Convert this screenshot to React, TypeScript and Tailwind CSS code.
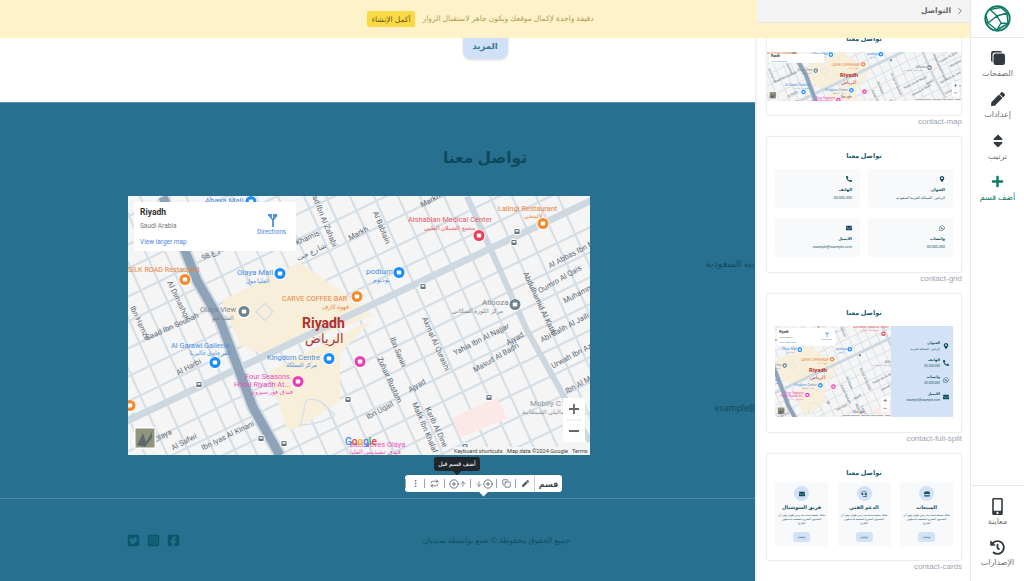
import { ArrowDown, ArrowUp, ChevronLeft, CirclePlus, Copy, EllipsisVertical, Repeat } from "lucide-react";
import type { ReactNode } from "react";
import { FaEnvelope, FaHeadset, FaHistory, FaMapMarkerAlt, FaMobileAlt, FaPen, FaPhoneAlt, FaPlus, FaSort, FaStore, FaWhatsapp } from "react-icons/fa";
import { FaSquareFacebook, FaSquareInstagram, FaSquareTwitter } from "react-icons/fa6";
import { IoCopy } from "react-icons/io5";

const sans = "font-['Noto_Sans','DejaVu_Sans',sans-serif]";

// streets: parallel to the main diagonal (intercepts) and to the dark highway (offsets)
const crossStreets = [20, 48, 72, 100, 125, 152, 180, 205, 255, 280, 305, 332, 358, 385, 410, 440];
const longStreets = [-100, -78, -55, -30, -8, 12, 58, 82, 104, 128, 150, 176, 198, 222, 246, 270, 292, 316, 362, 384, 408, 430];

const streetLabels: [string, number, number, number][] = [
  ["Al Dimashqi", 39, 86, 64],
  ["Saad Ibn Soubah", 19, 144, -24],
  ["Ibn Hamza", 2, 111, 65],
  ["Al Harbi", 50, 179, -28],
  ["Al Safwi", 45, 254, -28],
  ["Ibn Iyas Al Kinani", 75, 254, -26],
  ["Al Olaya", 20, 250, -28],
  ["Khamis", 169, 49, -25],
  ["شارع 98", 75, 64, -25],
  ["شارع مت", 170, 64, -25],
  ["Mohammad Ibn Al Zahabi", 172, -30, 68],
  ["Markh", 294, 11, -28],
  ["Markh", 222, 44, -28],
  ["Al Babtain", 245, 16, 68],
  ["Abdulhamid Al Katib", 395, 77, 65],
  ["Al Abbas Ibn M", 422, 72, -28],
  ["Oumro Al Qais", 412, 97, -30],
  ["Muhammad", 437, 107, -28],
  ["Abi Salih Al Jaili", 414, 146, -28],
  ["Urwah Ibn Az", 425, 172, -28],
  ["Ibn Al Mu", 439, 197, -28],
  ["Masud Al Badri", 347, 176, -30],
  ["Yahia Ibn Al Najjar", 327, 159, -27],
  ["Ajyad", 380, 149, -30],
  ["Ajyad", 282, 196, -30],
  ["Ibn Uqail", 240, 223, -28],
  ["Ibn Sanin", 262, 142, 68],
  ["Zuhair Rustam", 249, 162, 65],
  ["Malik Ibn Khalaf", 284, 207, 67],
  ["Karib Al Dine", 297, 212, 65],
  ["Akmal Al Qurashi", 294, 122, 66],
];

const placeLabels: [string, number, number, string, number][] = [
  ["Abaya Mall", 77, 6, "#4a90e2", 7.8],
  ["Olaya Mall", 109, 78, "#4a90e2", 7.8],
  ["العليا مول", 118, 86, "#4a90e2", 5.8],
  ["podium", 238, 77, "#4a90e2", 8],
  ["بوديوم", 245, 85, "#4a90e2", 5.8],
  ["CARVE COFFEE BAR", 154, 104, "#e8843c", 7.2],
  ["قهوة كارف", 194, 112, "#e8843c", 5.8],
  ["SILK ROAD Restaurant", 0, 75, "#e8843c", 7.2],
  ["Olaya View", 72, 115, "#7b8790", 7.4],
  ["العليا فيو", 84, 123, "#7b8790", 5.8],
  ["Alshablan Medical Center", 280, 25, "#e8596c", 7.4],
  ["مجمع الشبلان الطبي", 296, 33, "#e8596c", 5.8],
  ["Lalingi Restaurant", 370, 14, "#e8843c", 7.4],
  ["لالينجي", 396, 21, "#e8843c", 5.8],
  ["Allooza", 354, 108, "#7b8790", 8],
  ["مركز اللوزة السكاني", 324, 116, "#7b8790", 5.8],
  ["Al Garawi Galleria", 43, 151, "#4a90e2", 7.4],
  ["القرعاوي غاليريا", 62, 158, "#4a90e2", 5.8],
  ["Kingdom Centre", 139, 163, "#4a90e2", 7.4],
  ["مركز المملكة", 158, 170, "#4a90e2", 5.8],
  ["Four Seasons", 117, 182, "#ec4dbb", 7.4],
  ["Hotel Riyadh At...", 106, 190, "#ec4dbb", 7.4],
  ["فندق فور سيزونز", 122, 197, "#ec4dbb", 5.8],
  ["Executives Olaya", 222, 250, "#ec4dbb", 7.4],
  ["فندق تنفيذيس العليا", 222, 257, "#ec4dbb", 5.8],
  ["Mobily C1", 402, 209, "#8a949c", 8],
  ["ماليلي الشيتقابية", 394, 217, "#8a949c", 5.8],
];

const pins: [number, number, string][] = [
  [123, 5, "#1a8cff"],
  [152, 77, "#1a8cff"],
  [271, 76, "#1a8cff"],
  [229, 100, "#f28b30"],
  [57, 83, "#f28b30"],
  [116, 115, "#6f8290"],
  [351, 39, "#ea3f56"],
  [415, 27, "#f28b30"],
  [387, 108, "#6f8290"],
  [87, 166, "#1a8cff"],
  [201, 162, "#1a8cff"],
  [170, 185, "#ec3fb2"],
  [232, 165, "#ec3fb2"],
  [2, 209, "#f28b30"],
];

const busStops: [number, number][] = [
  [389, 35], [386, 46], [295, 90], [71, 188], [220, 203], [133, 242], [156, 247], [361, 201], [337, 250],
];

type MapViewProps = {
  width: number;
  height: number;
  scale?: number;
  ui?: number;
  compact?: boolean;
};

// Street map drawing; thumbnails reuse it as a centred crop, the google controls stay in the corners
function MapView({ width, height, scale = 1, ui = 1, compact = false }: MapViewProps) {
  const vw = width / scale;
  const vh = height / scale;
  const x0 = (462 - vw) / 2;
  const y0 = (258 - vh) / 2;
  const k = ui / scale;

  return (
    <svg width={width} height={height} viewBox={`${x0} ${y0} ${vw} ${vh}`} className="block shrink-0 font-['Roboto',sans-serif]">
      <rect x={-50} y={-50} width={600} height={400} fill="#f5f5f5" />
      {crossStreets.map((b) => (
        <line key={b} x1={-20} y1={b + 9.7} x2={480} y2={b - 233} stroke="#d6dfe6" strokeWidth={2.2} />
      ))}
      {longStreets.map((c) => (
        <line key={c} x1={c - 9} y1={-20} x2={c + 127} y2={280} stroke="#d6dfe6" strokeWidth={2.2} />
      ))}
      <polygon points="94,104 172,66 212,94 245,119 140,159 112,149" fill="#f8efdb" />
      <polygon points="140,176 224,132 244,124 212,157 212,204 172,231 160,234" fill="#f8efdb" />
      <path d="M137 107l8 8-8 9-9-9ZM172 229c4-10 4-20 6-24s10-2 14 0 10 10 14 12-10 8-20 10Z" fill="none" stroke="#d6dfe6" strokeWidth={1.4} />
      <polygon points="325,221 369,201 379,222 332,241" fill="#fce8e6" />
      <polygon points="0,220 6,215 10,222 3,226" fill="#cdeccf" />
      <polyline points="339,0 399,134 440,207 462,245" fill="none" stroke="#cdd7df" strokeWidth={6} />
      <line x1={-10} y1={229} x2={480} y2={-4} stroke="#ced8e1" strokeWidth={7} />
      <polyline points="35,0 69,84 92,124 125,211 152,259" fill="none" stroke="#d2dbe3" strokeWidth={13} />
      <polyline points="35,0 69,84 92,124 125,211 152,259" fill="none" stroke="#8ea3b8" strokeWidth={9} />
      {streetLabels.map(([t, x, y, r], i) => (
        <text key={i} x={x} y={y} fontSize={7.6} fill="#5f6b78" transform={`rotate(${r} ${x} ${y})`}>
          {t}
        </text>
      ))}
      {placeLabels.map(([t, x, y, c, s], i) => (
        <text key={i} x={x} y={y} fontSize={s} fill={c}>
          {t}
        </text>
      ))}
      <text x={174} y={131} fontSize={14} fontWeight={700} fill="#b3312c">Riyadh</text>
      <text x={177} y={146} fontSize={13} fill="#b3312c">الرياض</text>
      {pins.map(([x, y, c], i) => (
        <g key={i}>
          <circle cx={x} cy={y + 0.5} r={6.5} fill="#ffffff" />
          <circle cx={x} cy={y} r={5.5} fill={c} />
          <rect x={x - 2.2} y={y - 2} width={4.4} height={4} rx={0.8} fill="#ffffff" />
        </g>
      ))}
      {busStops.map(([x, y], i) => (
        <g key={i}>
          <circle cx={x} cy={y} r={3.8} fill="#ffffff" />
          <rect x={x - 2.6} y={y - 2.6} width={5.2} height={5.2} rx={1.2} fill="#66757f" />
          <rect x={x - 1.5} y={y - 1.4} width={3} height={1.6} fill="#ffffff" />
        </g>
      ))}
      {/* info window */}
      <g transform={`translate(${x0 + 6 * k} ${y0 + 6 * k}) scale(${k})`}>
        <rect width={162} height={compact ? 26 : 49} fill="#ffffff" />
        <text x={6} y={compact ? 10 : 13} fontSize={8.5} fontWeight={700} fill="#333333">Riyadh</text>
        {compact ? (
          <text x={6} y={22} fontSize={6.5} fill="#4a86e8">View larger map</text>
        ) : (
          <g>
            <text x={6} y={26} fontSize={6.5} fill="#777777">Saudi Arabia</text>
            <text x={6} y={42} fontSize={6.5} fill="#4a86e8">View larger map</text>
            <path d="M139 25v-7l-4-5m4 5 4-5m-9 0h3v3m6-3h-3v3" fill="none" stroke="#4a90e2" strokeWidth={1.8} />
            <text x={123} y={32} fontSize={6.5} fill="#4a86e8">Directions</text>
          </g>
        )}
      </g>
      {/* satellite toggle */}
      <g transform={`translate(${x0 + 6 * k} ${y0 + vh - 28 * k}) scale(${k})`}>
        <rect width={22} height={22} rx={2} fill="#ffffff" />
        <rect x={1.5} y={1.5} width={19} height={19} fill="#93947e" />
        <path d="M3 18 9 6l3 9 6-10v6l-7 9Z" fill="#5c6a6c" />
      </g>
      {/* zoom buttons */}
      <g transform={`translate(${x0 + vw - 27 * k} ${y0 + vh - 57 * k}) scale(${k})`}>
        <rect width={22} height={44} fill="#ffffff" />
        <line x1={3} y1={22} x2={19} y2={22} stroke="#e6e6e6" strokeWidth={1} />
        <path d="M6 11h10M11 6v10M6 33h10" stroke="#666666" strokeWidth={1.8} />
      </g>
      {/* attribution */}
      <g transform={`translate(${x0 + vw} ${y0 + vh}) scale(${k})`}>
        <rect x={-136} y={-8} width={136} height={8} fill="#f5f5f5" />
        <text x={-136} y={-2} fontSize={5.6} fill="#444444">Keyboard shortcuts</text>
        <text x={-83} y={-2} fontSize={5.6} fill="#444444">Map data ©2024 Google</text>
        <text x={-18} y={-2} fontSize={5.6} fill="#444444">Terms</text>
      </g>
      <g transform={`translate(${x0 + 217 * k} ${y0 + vh - 10 * k}) scale(${k})`}>
        <text fontSize={10} fontWeight={500}>
          <tspan fill="#4285f4">G</tspan>
          <tspan fill="#ea4335">o</tspan>
          <tspan fill="#fbbc05">o</tspan>
          <tspan fill="#4285f4">g</tspan>
          <tspan fill="#34a853">l</tspan>
          <tspan fill="#ea4335">e</tspan>
        </text>
      </g>
    </svg>
  );
}

function SandyanLogo() {
  return (
    <svg width={27} height={27} viewBox="0 0 27 27" fill="none" stroke="#117a65" strokeWidth={1.5} strokeLinejoin="round">
      <circle cx={13.5} cy={13.5} r={12.2} strokeWidth={1.9} />
      <path d="M6 4.5 17 2.5 23 8 13 11 6 4.5ZM13 11l-9 7 9 7 11-6.5L23 8M13 11l4 7-4 7M4 18 2 11M17 18l7 .5" />
    </svg>
  );
}

function SideItem({ icon, label, className }: { icon: ReactNode; label: string; className?: string }) {
  return (
    <div className={`flex h-[41.3px] flex-col items-center ${className ?? "text-[#6b7278]"}`}>
      <span className="flex h-[20px] shrink-0 items-center text-[#333a40]">{icon}</span>
      <span className="-mt-[1px] text-[8px] leading-[12px] whitespace-nowrap">{label}</span>
    </div>
  );
}

function ThumbCard({ label, height, children }: { label: string; height: string; children: ReactNode }) {
  return (
    <div className="flex flex-col">
      <div className={`flex flex-col items-center overflow-hidden rounded-[3px] border border-[#eceef1] bg-white shadow-[0_0_2px_rgba(0,0,0,0.05)] ${height}`}>
        <p dir="rtl" className="mt-[13px] h-[12px] text-[6.5px] leading-[12px] font-bold text-[#1d5b6e]">تواصل معنا</p>
        {children}
      </div>
      <p className="h-[20px] text-right font-['Liberation_Sans',sans-serif] text-[8px] leading-[11px] text-[#9ca3af]">{label}</p>
    </div>
  );
}

function GridBox({ icon, title, value }: { icon: ReactNode; title: string; value: string }) {
  return (
    <div className="flex h-[39px] flex-col items-start rounded-[3px] bg-[#f7f9fb] px-[8px] pt-[7px] text-[#0f4c5c]">
      <span className="h-[8px] text-[6px]">{icon}</span>
      <p className="mt-[2px] text-[4px] leading-[7px] font-bold">{title}</p>
      <p className="mt-[1px] text-[3.5px] leading-[7px]">{value}</p>
    </div>
  );
}

function SplitRow({ icon, title, value }: { icon: ReactNode; title: string; value: string }) {
  return (
    <div dir="rtl" className="flex h-[12px] items-center gap-[3px] text-[#0f4c5c]">
      <span className="text-[6px]">{icon}</span>
      <div>
        <p className="text-[3.6px] leading-[6px] font-bold">{title}</p>
        <p className="text-[3px] leading-[6px]">{value}</p>
      </div>
    </div>
  );
}

function TeamCard({ icon, title }: { icon: ReactNode; title: string }) {
  return (
    <div dir="rtl" className="flex h-[64px] w-[53px] flex-col items-center bg-[#f7f9fb] pt-[4px] text-[#0f4c5c]">
      <span className="flex size-[15px] items-center justify-center rounded-full bg-[#d3e2f7] text-[6px]">{icon}</span>
      <p className="mt-[2px] text-[5px] leading-[9px] font-bold">{title}</p>
      <p className="mt-[1px] px-[3px] text-center text-[2.8px] leading-[4px]">هناك حقيقة مثبتة منذ زمن طويل وهي أن المحتوى المقروء لصفحة ما سيلهي القارئ</p>
      <span className="mt-auto mb-[4px] w-[17px] rounded-[3px] bg-[#d3e2f7] text-center text-[3px] leading-[10px]">تواصل</span>
    </div>
  );
}

function ContactRow({ title, value, ltr }: { title: string; value: string; ltr?: boolean }) {
  return (
    <div dir="rtl" className="h-[40px] pr-[4px] text-[#0f4c5c]">
      <p className="text-[11px] leading-[20px] font-bold">{title}</p>
      <p dir={ltr ? "ltr" : "rtl"} className={`leading-[20px] ${ltr ? "mr-[28px] text-right text-[8.5px]" : "text-[9.5px]"}`}>{value}</p>
    </div>
  );
}

function ToolCell({ children, className }: { children: ReactNode; className: string }) {
  return <span className={`flex h-[9px] items-center justify-center border-l border-[#9aa3a8] ${className}`}>{children}</span>;
}

export default function App() {
  return (
    <div className={`relative flex h-[581px] w-[1024px] overflow-hidden bg-white ${sans}`}>
      <main className="flex h-[581px] w-[970px] shrink-0 flex-col">
        <div dir="rtl" className="relative z-10 flex h-[38px] items-center justify-center gap-[8px] bg-[#fef2c9] pr-[9px]">
          <p className="text-[7.6px] text-[#b39c55]">دقيقة واحدة لإكمال موقعك ويكون جاهز لاستقبال الزوار</p>
          <span className="rounded-[2px] bg-[#fbd946] px-[4px] text-[7.6px] leading-[16px] text-[#6c5a12]">أكمل الإنشاء</span>
        </div>
        <section className="flex h-[64px] justify-center bg-white">
          <button className="-mt-[9px] h-[30px] w-[45px] rounded-lg bg-[#cfe0f7] pt-[5px] text-[8.5px] font-bold text-[#3b7590] shadow-[0_1px_3px_rgba(0,0,0,0.15)]">
            المزيد
          </button>
        </section>
        <section className="relative flex flex-1 flex-col border-t border-[#5f93aa] bg-[#27708f]">
          <h2 dir="rtl" className="mt-[40px] h-[28px] text-center text-[15.5px] leading-[28px] font-bold text-[#0c4a5c]">تواصل معنا</h2>
          <div className="mt-[25px] ml-[128px] grid h-[259px] w-[714px] grid-cols-[462px_252px]">
            <MapView width={462} height={259} />
            <div className="flex flex-col justify-center gap-[8px]">
              <ContactRow title="العنوان" value="الرياض - المملكة العربية السعودية" />
              <ContactRow title="الهاتف" value="00-000-000" />
              <ContactRow title="واتساب" value="00-000-000" />
              <ContactRow title="الايميل" value="example@example.com" ltr />
            </div>
          </div>

          <footer className="mt-[43px] flex flex-1 items-start justify-between border-t border-[#4f8aa4] pt-[33px] pr-[400px] pl-[127px]">
            <div className="mt-[2px] flex gap-[7px] text-[13px] text-[#07596a]">
              <FaSquareTwitter />
              <FaSquareInstagram />
              <FaSquareFacebook />
            </div>
            <p dir="rtl" className="text-[7.8px] leading-[16px] text-[#0f5266]">جميع الحقوق محفوظة © صنع بواسطة سنديان</p>
          </footer>

          {/* section toolbar */}
          <div dir="rtl" className="absolute top-[354px] left-[434px] w-[46px] rounded-[3px] bg-[#1f272c] text-center text-[6px] leading-[14px] text-white">
            أضف قسم قبل
            <span className="absolute -bottom-[3px] left-[20px] size-[6px] rotate-45 bg-[#1f272c]" />
          </div>
          <div className="absolute top-[372px] left-[405px] flex h-[17px] w-[157px] items-center rounded-[3px] bg-white text-[#555f66]">
            <ToolCell className="w-[19px]"><EllipsisVertical size={9} /></ToolCell>
            <ToolCell className="w-[20px]"><Repeat size={9} /></ToolCell>
            <ToolCell className="w-[26px]"><CirclePlus size={10} /><ArrowUp size={8} /></ToolCell>
            <ToolCell className="w-[26px]"><ArrowDown size={8} /><CirclePlus size={10} /></ToolCell>
            <ToolCell className="w-[19px]"><Copy size={9} /></ToolCell>
            <ToolCell className="w-[19px]"><FaPen size={7} /></ToolCell>
            <span dir="rtl" className="flex h-full flex-1 items-center justify-center border-l border-[#cbd2d6] text-[8px] font-bold text-[#3b464d]">قسم</span>
            <span className="absolute -bottom-[3px] left-[75px] size-[7px] rotate-45 bg-white" />
          </div>
        </section>
      </main>

      {/* layouts panel lies over the page canvas */}
      <aside className="absolute top-0 left-[755px] flex h-full w-[215px] flex-col overflow-hidden border-l-2 border-[#eef2f6] bg-white">
        <div dir="rtl" className="relative z-10 flex h-[23px] shrink-0 items-center gap-[4px] border-b border-[#e8e8e8] bg-[#f3f3f3] pr-[5px] text-[7.6px] font-bold text-[#666666]">
          <ChevronLeft size={10} className="rotate-180" />
          <span>التواصل</span>
        </div>
        <div className="-mt-[4px] flex flex-col pr-[8px] pl-[9px]">
          <ThumbCard label="contact-map" height="h-[97px]">
            <div className="mt-[7px]">
              <MapView width={194} height={49} scale={0.42} ui={0.34} compact />
            </div>
          </ThumbCard>
          <ThumbCard label="contact-grid" height="h-[137px]">
            <div dir="rtl" className="mt-[7px] grid w-[178px] grid-cols-2 gap-x-[8px] gap-y-[10px]">
              <GridBox icon={<FaMapMarkerAlt />} title="العنوان" value="الرياض - المملكة العربية السعودية" />
              <GridBox icon={<FaPhoneAlt />} title="الهاتف" value="00-000-000" />
              <GridBox icon={<FaWhatsapp />} title="واتساب" value="00-000-000" />
              <GridBox icon={<FaEnvelope />} title="الايميل" value="example@example.com" />
            </div>
          </ThumbCard>
          <ThumbCard label="contact-full-split" height="h-[140px]">
            <div className="mt-[7px] flex w-[178px]">
              <MapView width={116} height={91} scale={0.42} ui={0.36} />
              <div dir="rtl" className="flex h-[91px] flex-1 flex-col items-start justify-center gap-[5px] bg-[#d3e2f7] pr-[4px]">
                <SplitRow icon={<FaMapMarkerAlt />} title="العنوان" value="الرياض - المملكة العربية" />
                <SplitRow icon={<FaPhoneAlt />} title="الهاتف" value="00-000-000" />
                <SplitRow icon={<FaWhatsapp />} title="واتساب" value="00-000-000" />
                <SplitRow icon={<FaEnvelope />} title="الايميل" value="example@example.com" />
              </div>
            </div>
          </ThumbCard>
          <ThumbCard label="contact-cards" height="h-[108px]">
            <div className="mt-[3px] flex w-[178px] justify-between">
              <TeamCard icon={<FaEnvelope />} title="فريق السوشيال" />
              <TeamCard icon={<FaHeadset />} title="الدعم الفني" />
              <TeamCard icon={<FaStore />} title="المبيعات" />
            </div>
          </ThumbCard>
        </div>
      </aside>

      <nav dir="rtl" className="flex w-[54px] shrink-0 flex-col border-l border-[#e8e8e8] bg-white">
        <div className="flex h-[38px] shrink-0 items-center justify-center border-b border-[#e8e8e8]">
          <SandyanLogo />
        </div>
        <div className="flex flex-col pt-[10px]">
          <SideItem icon={<IoCopy size={16} />} label="الصفحات" />
          <SideItem icon={<FaPen size={14} />} label="إعدادات" />
          <SideItem icon={<FaSort size={16} />} label="ترتيب" />
          <SideItem icon={<FaPlus size={13} className="text-[#117a65]" />} label="أضف قسم" className="text-[#117a65]" />
        </div>
        <div className="mt-auto flex h-[96px] flex-col border-t border-[#e8e8e8] pt-[10px]">
          <SideItem icon={<FaMobileAlt size={17} />} label="معاينة" />
          <SideItem icon={<FaHistory size={15} />} label="الإصدارات" />
        </div>
      </nav>
    </div>
  );
}
